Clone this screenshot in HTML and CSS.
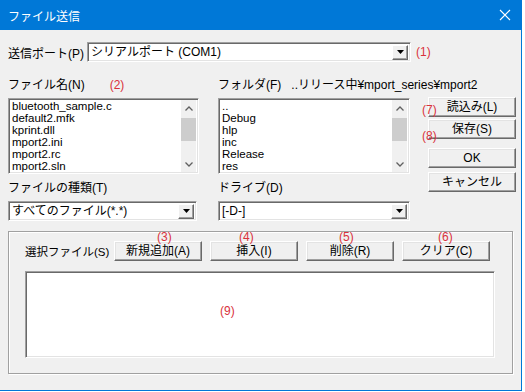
FILE: index.html
```html
<!DOCTYPE html>
<html lang="ja">
<head>
    <meta charset="UTF-8">
    <meta name="viewport" content="width=device-width, initial-scale=1.0">
    <title>ファイル送信</title>
    <link rel="stylesheet" href="styles.css">
</head>
<body>
    <div class="dialog">
        <div class="titlebar">
            <span class="title">ファイル送信</span>
            <svg class="close" width="12" height="12" viewBox="0 0 12 12"><path d="M1 1L11 11M11 1L1 11" stroke="#fff" stroke-width="1.1" fill="none"/></svg>
        </div>

        <div class="content">
            <div class="port-row">
                <span class="port-label">送信ポート(P)</span>
                <div class="combo combo-port">
                    <span class="combo-text">シリアルポート (COM1)</span>
                    <span class="drop"><svg width="7" height="4" viewBox="0 0 7 4"><path d="M0 0H7L3.5 4Z" fill="#000"/></svg></span>
                </div>
                <span class="mark mark-1">(1)</span>
            </div>

            <div class="head-row">
                <span class="col-file">ファイル名(N)<span class="mark mark-2">(2)</span></span>
                <span class="col-folder">フォルダ(F)<span class="path">..リリース中¥mport_series¥mport2</span></span>
            </div>

            <div class="main">
                <div class="left">
                    <div class="lists">
                        <div class="listbox list-file">
                            <ul class="items">
                                <li>bluetooth_sample.c</li>
                                <li>default2.mfk</li>
                                <li>kprint.dll</li>
                                <li>mport2.ini</li>
                                <li>mport2.rc</li>
                                <li>mport2.sln</li>
                            </ul>
                            <div class="scrollbar">
                                <svg class="arrow" width="8" height="5" viewBox="0 0 8 5"><path d="M0.5 4.5L4 1L7.5 4.5" stroke="#606060" stroke-width="1.3" fill="none"/></svg>
                                <div class="track"><div class="thumb"></div></div>
                                <svg class="arrow" width="8" height="5" viewBox="0 0 8 5"><path d="M0.5 0.5L4 4L7.5 0.5" stroke="#606060" stroke-width="1.3" fill="none"/></svg>
                            </div>
                        </div>
                        <div class="listbox list-folder">
                            <ul class="items">
                                <li>..</li>
                                <li>Debug</li>
                                <li>hlp</li>
                                <li>inc</li>
                                <li>Release</li>
                                <li>res</li>
                            </ul>
                            <div class="scrollbar">
                                <svg class="arrow" width="8" height="5" viewBox="0 0 8 5"><path d="M0.5 4.5L4 1L7.5 4.5" stroke="#606060" stroke-width="1.3" fill="none"/></svg>
                                <div class="track"><div class="thumb"></div></div>
                                <svg class="arrow" width="8" height="5" viewBox="0 0 8 5"><path d="M0.5 0.5L4 4L7.5 0.5" stroke="#606060" stroke-width="1.3" fill="none"/></svg>
                            </div>
                        </div>
                    </div>

                    <div class="head-row head-lower">
                        <span class="col-file">ファイルの種類(T)</span>
                        <span class="col-folder">ドライブ(D)</span>
                    </div>

                    <div class="combos">
                        <div class="combo combo-type">
                            <span class="combo-text">すべてのファイル(*.*)</span>
                            <span class="drop"><svg width="7" height="4" viewBox="0 0 7 4"><path d="M0 0H7L3.5 4Z" fill="#000"/></svg></span>
                        </div>
                        <div class="combo combo-drive">
                            <span class="combo-text">[-D-]</span>
                            <span class="drop"><svg width="7" height="4" viewBox="0 0 7 4"><path d="M0 0H7L3.5 4Z" fill="#000"/></svg></span>
                        </div>
                    </div>
                </div>

                <div class="side">
                    <div class="btn btn-load">読込み(L)<span class="mark mark-7">(7)</span></div>
                    <div class="btn btn-save">保存(S)<span class="mark mark-8">(8)</span></div>
                    <div class="btn btn-ok">OK</div>
                    <div class="btn btn-cancel">キャンセル</div>
                </div>
            </div>

            <div class="group">
                <div class="group-row">
                    <span class="group-label">選択ファイル(S)</span>
                    <div class="btn btn-wide">新規追加(A)<span class="mark mark-3">(3)</span></div>
                    <div class="btn btn-wide">挿入(I)<span class="mark mark-4">(4)</span></div>
                    <div class="btn btn-wide">削除(R)<span class="mark mark-5">(5)</span></div>
                    <div class="btn btn-wide">クリア(C)<span class="mark mark-6">(6)</span></div>
                </div>
                <div class="selected">
                    <span class="mark mark-9">(9)</span>
                </div>
            </div>
        </div>
    </div>
</body>
</html>
```

FILE: styles.css
```css
body {
    margin: 0;
    background-color: #fff;
    font-family: "Liberation Sans", "Noto Sans CJK JP", sans-serif;
    font-size: 12px;
    color: #000;
    white-space: nowrap;
}

.dialog {
    width: 522px;
    height: 391px;
    box-sizing: border-box;
    background-color: #f0f0f0;
    border-right: 1px solid #0078d7;
    border-bottom: 1px solid #0078d7;
}

.titlebar {
    height: 30px;
    background-color: #0078d7; /* Win10 accent */
    color: #fff;
    display: flex;
    align-items: center;
    justify-content: space-between;
    padding: 0 10px 0 8px;
}

.title {
    font-size: 12px;
}

.content {
    padding: 12px 0 0 8px;
}

/* shared controls */
.mark {
    color: #d9323c;
    font-size: 12px;
    line-height: 14px;
}

.combo, .listbox, .selected {
    box-sizing: border-box;
    background-color: #fff;
    border: 1px solid;
    border-color: #a0a0a0 #fff #fff #a0a0a0;
    box-shadow: inset 1px 1px 0 #696969, inset -1px -1px 0 #e3e3e3;
}

.combo {
    display: flex;
    align-items: center;
    justify-content: space-between;
    padding: 2px 2px 2px 3px;
    height: 20px;
}

.combo-text {
    line-height: 14px;
}

.drop {
    width: 16px;
    height: 15px;
    box-sizing: border-box;
    display: flex;
    align-items: center;
    justify-content: center;
    background-color: #f0f0f0;
    border: 1px solid;
    border-color: #fff #696969 #696969 #fff;
    box-shadow: inset -1px -1px 0 #a0a0a0;
}

.btn {
    position: relative;
    box-sizing: border-box;
    height: 20px;
    display: flex;
    align-items: center;
    justify-content: center;
    background-color: #f0f0f0;
    border: 1px solid;
    border-color: #fff #696969 #696969 #fff;
    box-shadow: inset -1px -1px 0 #a0a0a0, inset 1px 1px 0 #e3e3e3;
    line-height: 14px;
}

/* port row */
.port-row {
    display: flex;
    align-items: center;
    height: 20px;
}

.port-label {
    width: 79px;
}

.combo-port {
    width: 324px;
}

.mark-1 {
    margin-left: 5px;
}

/* column heads */
.head-row {
    display: flex;
    margin-top: 16px;
    line-height: 14px;
}

.col-file {
    width: 210px;
}

.mark-2 {
    margin-left: 25px;
}

.path {
    margin-left: 10px;
}

.main {
    display: flex;
    margin-top: 6px;
}

.lists {
    display: flex;
    gap: 19px;
}

.listbox {
    display: flex;
    height: 76px;
    padding: 1px 2px;
}

.list-file {
    width: 191px;
}

.list-folder {
    width: 192px;
}

.items {
    flex: 1;
    list-style: none;
    margin: 0;
    padding: 0 0 0 1px;
    font-size: 11.5px;
    line-height: 12px;
    overflow: hidden;
}

.scrollbar {
    width: 15px;
    display: flex;
    flex-direction: column;
    align-items: center;
    background-color: #f0f0f0;
}

.arrow {
    margin: 6px 0 5px;
}

.track {
    flex: 1;
    width: 100%;
}

.thumb {
    height: 23px;
    margin-top: 2px;
    background-color: #cdcdcd;
}

.head-lower {
    margin-top: 7px;
}

.combos {
    display: flex;
    gap: 21px;
    margin-top: 6px;
}

.combo-type {
    width: 189px;
}

.combo-drive {
    width: 192px;
}

/* right-hand buttons */
.side {
    display: flex;
    flex-direction: column;
    margin-left: 18px;
    margin-top: -1px;
    width: 88px;
}

.btn-save {
    margin-top: 2px;
}

.btn-ok {
    margin-top: 9px;
}

.btn-cancel {
    margin-top: 4px;
}

.mark-7, .mark-8 {
    position: absolute;
    left: -7px;
}

.mark-7 {
    top: 5px;
}

.mark-8 {
    top: 9px;
}

/* selected files group */
.group {
    box-sizing: border-box;
    width: 505px;
    height: 143px;
    margin-top: 10px;
    padding: 9px 0 0 16px;
    border: 1px solid #a0a0a0;
    box-shadow: inset 1px 1px 0 #fff, 1px 1px 0 #fff;
}

.group-row {
    display: flex;
    align-items: center;
    gap: 8px;
}

.group-label {
    width: 81px;
    font-size: 11.5px;
}

.btn-wide {
    width: 88px;
}

.mark-3, .mark-4, .mark-5, .mark-6 {
    position: absolute;
    top: -12px;
}

.mark-3 { left: 42px; }
.mark-4 { left: 28px; }
.mark-5 { left: 32px; }
.mark-6 { left: 35px; }

.selected {
    position: relative;
    width: 470px;
    height: 87px;
    margin-top: 10px;
}

.mark-9 {
    position: absolute;
    left: 194px;
    top: 32px;
}
```
